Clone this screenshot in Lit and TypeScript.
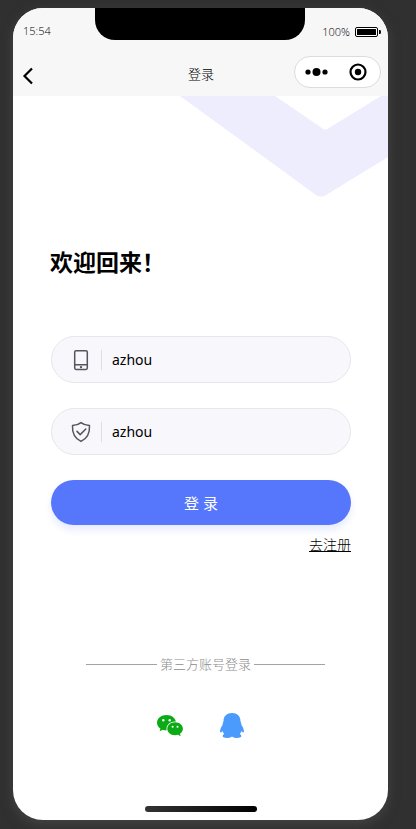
import { LitElement, html, css, svg } from "lit";
import { customElement, state } from "lit/decorators.js";

const phoneIcon = svg`
  <svg class="icon" viewBox="0 0 20 22" aria-hidden="true">
    <rect x="3.7" y="1.7" width="12.6" height="18.8" rx="1.4" />
    <path d="M3.7 15.8H16.3" />
    <circle class="dot" cx="10" cy="18.1" r="1.2" />
  </svg>`;

const shieldIcon = svg`
  <svg class="icon" viewBox="0 0 20 22" aria-hidden="true">
    <path d="M10 1.6C7.6 3.5 4.8 4.4 1.5 4.6C1.1 11.8 3.2 17.2 10 20.4C16.8 17.2 18.9 11.8 18.5 4.6C15.2 4.4 12.4 3.5 10 1.6Z" />
    <path d="M6 10.4L9.2 13.6L14.8 8" />
  </svg>`;

@customElement("app-root")
export class AppRoot extends LitElement {
  @state() private account = "azhou";
  @state() private password = "azhou";

  static styles = css`
    :host {
      display: flex;
      box-sizing: border-box;
      min-height: 100vh;
      padding: 8px 28px 9px 13px;
      background: #303030;
      color: #000;
      font-family: "Noto Sans", "Noto Sans CJK SC", sans-serif;
      font-size: 14px;
    }
    * {
      box-sizing: border-box;
    }
    .phone {
      flex: 1;
      display: flex;
      flex-direction: column;
      overflow: hidden;
      border-radius: 30px;
      background: #fff;
      box-shadow: 0 4px 12px #444;
    }
    .top {
      background: #f7f7f7;
    }
    .status {
      display: grid;
      grid-template-columns: 1fr 210px 1fr;
      height: 44px;
      padding-right: 1px;
      font-family: "Open Sans", "Noto Sans", sans-serif;
      font-size: 11px;
      font-weight: 300;
      line-height: 16px;
      color: #000;
    }
    .time {
      padding: 15px 0 0 10px;
    }
    .notch {
      height: 32px;
      border-radius: 0 0 20px 20px;
      background: #000;
    }
    .battery {
      display: flex;
      align-items: center;
      justify-content: flex-end;
      gap: 5px;
      height: 16px;
      margin-top: 16px;
      padding-right: 6px;
    }
    .battery svg {
      width: 26px;
      height: 10px;
    }
    .nav {
      display: grid;
      grid-template-columns: 1fr auto 1fr;
      align-items: center;
      height: 44px;
      padding: 0 7px 4px 8px;
    }
    .nav h1 {
      margin: 0;
      padding-top: 4px;
      font-size: 13px;
      font-weight: 300;
      line-height: 20px;
    }
    button {
      border: 0;
      padding: 0;
      background: none;
      font: inherit;
      cursor: pointer;
    }
    .back {
      width: 14px;
      height: 20px;
      margin-top: 8px;
    }
    svg {
      display: block;
    }
    .capsule {
      justify-self: end;
      display: flex;
      align-items: center;
      justify-content: space-between;
      width: 87px;
      height: 32px;
      padding: 0 13px 0 9px;
      border: 1px solid #dcdcdc;
      border-radius: 16px;
      background: #fff;
    }
    .page {
      position: relative;
      flex: 1;
      display: flex;
      flex-direction: column;
      padding: 148px 37px 8px;
    }
    .ribbon {
      position: absolute;
      top: 0;
      right: 0;
      width: 208px;
      height: 102px;
    }
    h2 {
      margin: 0 0 56px;
      font-size: 23px;
      font-weight: 700;
      line-height: 36px;
    }
    form {
      display: flex;
      flex-direction: column;
      margin-left: 1px;
    }
    .field {
      display: flex;
      align-items: center;
      height: 47px;
      margin-bottom: 25px;
      padding: 0 19px;
      border: 1px solid #e6e6ec;
      border-radius: 24px;
      background: #f8f7fc;
    }
    .icon {
      width: 20px;
      height: 22px;
      fill: none;
      stroke: #55555c;
      stroke-width: 1.5;
      stroke-linejoin: round;
      stroke-linecap: round;
    }
    .icon .dot {
      fill: #55555c;
      stroke: none;
    }
    .field input {
      flex: 1;
      min-width: 0;
      height: 20px;
      margin-left: 10px;
      padding: 0 0 0 10px;
      border: 0;
      border-left: 1px solid #dedee4;
      outline: 0;
      background: none;
      color: #000;
      font: inherit;
    }
    .submit {
      height: 45px;
      border-radius: 23px;
      background: #5677fc;
      box-shadow: 0 5px 7px rgba(86, 119, 252, 0.15);
      color: #fff;
      font-size: 15px;
    }
    .register {
      align-self: flex-end;
      margin-top: 10px;
      color: #000;
      font-weight: 300;
      line-height: 20px;
      text-underline-offset: 1px;
    }
    .third {
      display: flex;
      align-items: center;
      gap: 3px;
      margin: 99px 26px 0 36px;
      color: #8c8c8c;
      font-size: 13px;
      font-weight: 300;
      line-height: 20px;
      white-space: nowrap;
    }
    .third::before,
    .third::after {
      content: "";
      flex: 1;
      height: 1px;
      margin-top: 1px;
      background: #a3a3a3;
    }
    .social {
      display: flex;
      justify-content: center;
      gap: 36px;
      margin-top: 38px;
    }
    .social svg {
      width: 26px;
      height: 26px;
    }
    .home {
      width: 112px;
      height: 6px;
      margin: auto auto 0;
      border-radius: 3px;
      background: linear-gradient(90deg, #333, #000);
    }
  `;

  render() {
    return html`
      <main class="phone">
        <header class="top">
          <div class="status">
            <span class="time">15:54</span>
            <div class="notch"></div>
            <div class="battery">
              <span>100%</span>
              <svg viewBox="0 0 26 10" aria-hidden="true">
                <rect x=".5" y=".5" width="22" height="9" rx="1.5" fill="#fff" stroke="#000" />
                <rect x="2" y="2" width="19" height="6" rx=".5" />
                <path d="M24 3h1q1 0 1 2t-1 2h-1z" />
              </svg>
            </div>
          </div>
          <nav class="nav">
            <button class="back" aria-label="返回">
              <svg width="14" height="20" viewBox="0 0 14 20">
                <path d="M11 2.5L3.5 10L11 17.5" fill="none" stroke="#000" stroke-width="2.2" />
              </svg>
            </button>
            <h1>登录</h1>
            <div class="capsule">
              <button aria-label="更多">
                <svg width="24" height="18" viewBox="0 0 24 18">
                  <circle cx="4" cy="9" r="2.6" />
                  <circle cx="12.5" cy="9" r="4" />
                  <circle cx="21" cy="9" r="2.6" />
                </svg>
              </button>
              <button aria-label="关闭">
                <svg width="18" height="18" viewBox="0 0 18 18">
                  <circle cx="9" cy="9" r="7.5" fill="none" stroke="#000" stroke-width="2.2" />
                  <circle cx="9" cy="9" r="3.2" />
                </svg>
              </button>
            </div>
          </nav>
        </header>
        <section class="page">
          <svg class="ribbon" viewBox="0 0 208 102" aria-hidden="true">
            <path
              d="M0 0H95L142 32Q145 35 149 32L201 0H208V61L146 99Q141 102 136 99Z"
              fill="#ededfe"
            />
          </svg>
          <h2>欢迎回来！</h2>
          <form @submit=${(e: Event) => e.preventDefault()}>
            <label class="field">
              ${phoneIcon}
              <input
                aria-label="账号"
                .value=${this.account}
                @input=${(e: Event) => (this.account = (e.target as HTMLInputElement).value)}
              />
            </label>
            <label class="field">
              ${shieldIcon}
              <input
                aria-label="密码"
                .value=${this.password}
                @input=${(e: Event) => (this.password = (e.target as HTMLInputElement).value)}
              />
            </label>
            <button class="submit">登 录</button>
            <a class="register" href="#register">去注册</a>
          </form>
          <div class="third">第三方账号登录</div>
          <div class="social">
            <button aria-label="微信登录">
              <svg viewBox="0 0 26 26">
                <path
                  fill="#0bab15"
                  d="M9.5 3C4.2 3 0 6.4 0 10.7c0 2.4 1.3 4.5 3.4 5.9L2.6 19.3l3.2-1.6c1.2.4 2.4.6 3.7.6C14.7 18.3 19 14.9 19 10.7S14.8 3 9.5 3z"
                />
                <ellipse cx="18" cy="16.8" rx="8.6" ry="7.4" fill="#fff" />
                <path
                  fill="#0bab15"
                  d="M18 10.3c-4.300 0-7.700 2.900-7.700 6.500s3.400 6.500 7.700 6.500c1.100 0 2.100-.2 3-.5l2.700 1.400-.7-2.400c1.800-1.200 2.900-3 2.900-5 0-3.600-3.500-6.500-7.900-6.500z"
                />
                <g fill="#fff">
                  <circle cx="6.300" cy="8.300" r="1.200" />
                  <circle cx="12.700" cy="8.300" r="1.200" />
                  <circle cx="15.600" cy="14.700" r="1" />
                  <circle cx="20.500" cy="14.700" r="1" />
                </g>
              </svg>
            </button>
            <button aria-label="QQ登录">
              <svg viewBox="0 0 26 26">
                <path
                  fill="#4a9bfc"
                  d="M13 1C8 1 4.500 4.200 4.500 9c0 1-.6 1.500-.8 2.600-.1.700 0 1.200-.4 1.900C2 15.300 1 17.300 1.100 19.500c.1 1.600.9 1.500 2.300-.4.400 1 1 2 1.800 2.800-1.100.5-1.600 1.300-1.500 2.300.4 2.200 7.300 2.200 9.300.2 2 2 8.900 2 9.300-.2.100-1-.4-1.800-1.500-2.300.8-.8 1.400-1.800 1.800-2.800 1.400 1.900 2.200 2 2.300.4.100-2.200-.9-4.200-2.200-6-.4-.7-.3-1.200-.4-1.900-.2-1.100-.8-1.600-.8-2.600 0-4.800-3.500-8-8.500-8z"
                />
              </svg>
            </button>
          </div>
          <div class="home"></div>
        </section>
      </main>
    `;
  }
}
